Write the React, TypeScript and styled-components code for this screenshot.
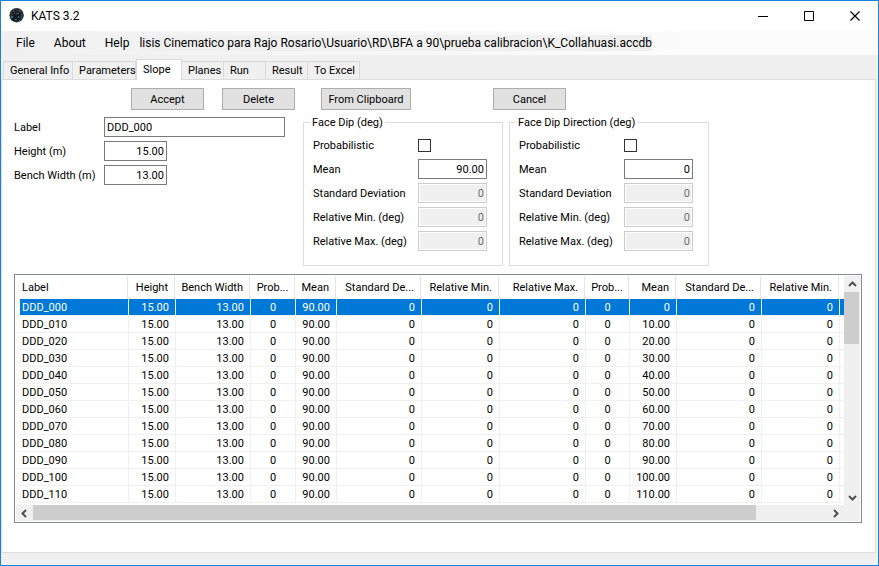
import React, { useState } from "react";
import styled, { createGlobalStyle } from "styled-components";

const GlobalStyle = createGlobalStyle`
  *, *::before, *::after { box-sizing: border-box; }
  body { margin: 0; background: #f0f0f0; }
  body, button, input, table { font: 11px/13px Roboto, "Liberation Sans", Arial, sans-serif; color: #000; }
`;

const Window = styled.div`
  display: flex;
  flex-direction: column;
  min-height: 100vh;
  border: 1px solid #1883d7;
  background: #f0f0f0;
`;

const TitleBar = styled.header`
  display: flex;
  align-items: center;
  height: 30px;
  padding-left: 8px;
  background: #fff;
`;

const Title = styled.h1`
  flex: 1;
  margin: 0 0 0 6px;
  font-size: 12px;
  line-height: 16px;
  font-weight: 400;
`;

const CaptionButton = styled.button`
  display: grid;
  place-items: center;
  width: 46px;
  height: 30px;
  padding: 0;
  border: 0;
  background: transparent;
`;

const MenuBar = styled.nav`
  display: flex;
  align-items: center;
  height: 24px;
  padding-left: 9px;
  background: linear-gradient(90deg, #f0f0f0, #fcfcfc 80%);
`;

const MenuItem = styled.button`
  padding: 0 6px;
  margin-right: 7px;
  border: 0;
  background: transparent;
  font-size: 12px;
  line-height: 16px;
`;

const FilePath = styled.span`
  margin-left: -3px;
  background: #f0f0f0;
  font-size: 12px;
  line-height: 16px;
  white-space: nowrap;
`;

const TabStrip = styled.div`
  display: flex;
  align-items: flex-end;
  height: 24px;
  padding-left: 2px;
`;

const Tab = styled.button<{ $active: boolean; $width: number }>`
  width: ${(p) => p.$width}px;
  height: ${(p) => (p.$active ? 21 : 18)}px;
  margin-bottom: ${(p) => (p.$active ? -1 : 0)}px;
  padding: 0 0 ${(p) => (p.$active ? 2 : 0)}px 6px;
  z-index: ${(p) => (p.$active ? 1 : 0)};
  border: 1px solid #d9d9d9;
  border-bottom: 0;
  border-left-width: ${(p) => (p.$active ? 1 : 0)}px;
  background: ${(p) => (p.$active ? "#fff" : "#f0f0f0")};
  text-align: left;
  white-space: nowrap;
  &:first-child { border-left-width: 1px; }
`;

const Page = styled.main`
  flex: 1;
  margin: 0 2px 12px 0;
  padding: 8px 13px 29px 12px;
  border: 1px solid #dcdcdc;
  background: #fff;
`;

const ButtonRow = styled.div`
  display: flex;
  gap: 18px;
  margin: 0 0 6px 117px;
`;

const PushButton = styled.button<{ $wide?: boolean }>`
  width: ${(p) => (p.$wide ? 90 : 73)}px;
  height: 22px;
  padding: 0;
  border: 1px solid #adadad;
  background: #e1e1e1;
  white-space: nowrap;
`;

const ButtonGroup = styled.div`
  display: flex;
  gap: 18px;
  margin-right: 8px;
`;

const CancelSlot = styled.div`
  margin-left: 64px;
`;

const Editor = styled.section`
  display: flex;
  align-items: flex-start;
  gap: 6px;
  margin-bottom: 8px;
`;

const GeneralFields = styled.div`
  display: grid;
  grid-template-columns: 90px 181px;
  row-gap: 4px;
  align-items: center;
  padding-top: 1px;
  margin-right: 12px;
`;

const FieldLabel = styled.label`
  white-space: nowrap;
`;

const TextBox = styled.input<{ $width: number; $numeric?: boolean }>`
  width: ${(p) => p.$width}px;
  height: 20px;
  padding: 0 2px;
  border: 1px solid #7a7a7a;
  border-radius: 0;
  background: #fff;
  text-align: ${(p) => (p.$numeric ? "right" : "left")};
  &:disabled {
    border-color: #ccc;
    background: #f0f0f0;
    box-shadow: inset 0 0 0 1px #fff;
    color: #6d6d6d;
  }
`;

const Group = styled.fieldset`
  display: grid;
  grid-template-columns: 105px 69px;
  grid-auto-rows: 20px;
  row-gap: 4px;
  align-items: center;
  width: 200px;
  margin: 0;
  padding: 6px 9px 14px;
  border: 1px solid #dcdcdc;
`;

const Legend = styled.legend`
  margin-left: -3px;
  padding: 0 2px;
`;

const CheckBox = styled.input`
  appearance: none;
  width: 13px;
  height: 13px;
  margin: 0;
  border: 1px solid #333;
  background: #fff;
  &:checked { background: #333; box-shadow: inset 0 0 0 2px #fff; }
`;

const ListView = styled.section`
  display: grid;
  grid-template-columns: minmax(0, 1fr) 16px;
  padding: 1px;
  border: 1px solid #828790;
`;

const ListBody = styled.div`
  height: 229px;
  overflow: hidden;
`;

const Table = styled.table`
  width: 100%;
  table-layout: fixed;
  border-collapse: separate;
  border-spacing: 0;
`;

const Col = styled.col<{ $width?: number }>`
  width: ${(p) => (p.$width ? `${p.$width}px` : "auto")};
`;

type Align = "left" | "right" | "center";

const HeadCell = styled.th<{ $align: Align }>`
  height: 23px;
  padding: 0 ${(p) => (p.$align === "center" ? 2 : 8)}px 0 ${(p) => (p.$align === "left" ? 6 : 0)}px;
  background: linear-gradient(#e5e5e5, #e5e5e5) no-repeat right 1px top / 1px 100%;
  font-weight: 400;
  text-align: ${(p) => p.$align};
  white-space: nowrap;
  &:last-child { background: none; padding: 0; }
`;

const Cell = styled.td<{ $align: Align }>`
  height: 17px;
  padding: 1px ${(p) => (p.$align === "right" ? 6 : 2)}px 0 2px;
  border-right: 1px solid #f0f0f0;
  border-bottom: 1px solid #f0f0f0;
  text-align: ${(p) => p.$align};
  white-space: nowrap;
  &:last-child { border-right: 0; padding: 0; }
`;

const Row = styled.tr<{ $selected: boolean }>`
  background: ${(p) => (p.$selected ? "#0078d7" : "#fff")};
  color: ${(p) => (p.$selected ? "#fff" : "#000")};
  ${Cell}:first-child { border-left: 4px solid #fff; }
`;

const ScrollTrack = styled.div<{ $vertical?: boolean }>`
  display: flex;
  flex-direction: ${(p) => (p.$vertical ? "column" : "row")};
  justify-content: space-between;
  ${(p) => (p.$vertical ? "" : "height: 16px;")}
  background: #f0f0f0;
`;

const ScrollButton = styled.button`
  display: grid;
  place-items: center;
  width: 17px;
  height: 16px;
  padding: 0;
  border: 0;
  background: transparent;
`;

const ScrollLane = styled.div`
  flex: 1;
`;

const VThumb = styled.div`
  width: 15px;
  height: 52px;
  background: #cdcdcd;
`;

const HThumb = styled.div`
  width: 91%;
  height: 15px;
  background: #cdcdcd;
`;

const Corner = styled.div`
  background: #f0f0f0;
`;

const arrows = {
  up: "M1 6 4.5 2.5 8 6",
  down: "M1 3 4.5 6.5 8 3",
  left: "M6 1 2.5 4.5 6 8",
  right: "M3 1 6.5 4.5 3 8",
};

function Arrow({ dir }: { dir: keyof typeof arrows }) {
  return (
    <svg width="9" height="9" viewBox="0 0 9 9" aria-hidden="true">
      <path d={arrows[dir]} fill="none" stroke="#505050" strokeWidth="2" />
    </svg>
  );
}

function AppIcon() {
  return (
    <svg width="16" height="16" viewBox="0 0 16 16" aria-hidden="true">
      <circle cx="7.6" cy="7.2" r="7.2" fill="#2b3033" />
      <path d="M3 4l3-2 2 2 3-1 2 3-2 2 1 3-3 2-3-1-3 1-1-4 2-2z" fill="#14191c" />
      <path d="M4 3l2 1M10 3l2 1M7 6l3-1M12 9l1 2" stroke="#555d60" strokeWidth="1" />
      <path d="M2 8h2v2H2zM6 11h2v1H6zM9 8h1v2H9zM12 6h1v1h-1zM5 5h1v1H5zM10 12h1v1h-1z" fill="#147d99" />
    </svg>
  );
}

const tabs = [
  { name: "General Info", width: 70 },
  { name: "Parameters", width: 63 },
  { name: "Slope", width: 46 },
  { name: "Planes", width: 42 },
  { name: "Run", width: 42 },
  { name: "Result", width: 42 },
  { name: "To Excel", width: 52 },
];

const columns: { title: string; width?: number; align: Align }[] = [
  { title: "Label", width: 113, align: "left" },
  { title: "Height", width: 47, align: "right" },
  { title: "Bench Width", width: 75, align: "right" },
  { title: "Prob...", width: 45, align: "center" },
  { title: "Mean", width: 41, align: "right" },
  { title: "Standard De...", width: 85, align: "right" },
  { title: "Relative Min.", width: 78, align: "right" },
  { title: "Relative Max.", width: 86, align: "right" },
  { title: "Prob...", width: 44, align: "center" },
  { title: "Mean", width: 47, align: "right" },
  { title: "Standard De...", width: 85, align: "right" },
  { title: "Relative Min.", width: 78, align: "right" },
  { title: "", align: "right" },
];

const rows = Array.from({ length: 12 }, (_, i) => {
  const angle = i * 10;
  return [
    `DDD_${String(angle).padStart(3, "0")}`,
    "15.00", "13.00", "0", "90.00", "0", "0", "0", "0",
    angle === 0 ? "0" : angle.toFixed(2),
    "0", "0", "",
  ];
});

function DipGroup({ id, title, mean }: { id: string; title: string; mean: string }) {
  const disabled = ["Standard Deviation", "Relative Min. (deg)", "Relative Max. (deg)"];
  return (
    <Group>
      <Legend>{title}</Legend>
      <FieldLabel htmlFor={`${id}-prob`}>Probabilistic</FieldLabel>
      <CheckBox id={`${id}-prob`} type="checkbox" />
      <FieldLabel htmlFor={`${id}-mean`}>Mean</FieldLabel>
      <TextBox id={`${id}-mean`} $width={69} $numeric defaultValue={mean} />
      {disabled.map((name, i) => (
        <React.Fragment key={name}>
          <FieldLabel htmlFor={`${id}-${i}`}>{name}</FieldLabel>
          <TextBox id={`${id}-${i}`} $width={69} $numeric disabled defaultValue="0" />
        </React.Fragment>
      ))}
    </Group>
  );
}

export default function App() {
  const [tab, setTab] = useState("Slope");
  const [selected, setSelected] = useState(0);
  return (
    <Window>
      <GlobalStyle />
      <TitleBar>
        <AppIcon />
        <Title>KATS 3.2</Title>
        <CaptionButton aria-label="Minimize">
          <svg width="11" height="11"><path d="M0 5.5h10" stroke="#000" /></svg>
        </CaptionButton>
        <CaptionButton aria-label="Maximize">
          <svg width="11" height="11"><path d="M.5 .5h9v9h-9z" fill="none" stroke="#000" /></svg>
        </CaptionButton>
        <CaptionButton aria-label="Close">
          <svg width="11" height="11"><path d="M.5 .5l9 9M9.5 .5l-9 9" stroke="#000" strokeWidth="1.2" /></svg>
        </CaptionButton>
      </TitleBar>
      <MenuBar>
        <MenuItem>File</MenuItem>
        <MenuItem>About</MenuItem>
        <MenuItem>Help</MenuItem>
        <FilePath>{"lisis Cinematico para Rajo Rosario\\Usuario\\RD\\BFA a 90\\prueba calibracion\\K_Collahuasi.accdb"}</FilePath>
      </MenuBar>
      <TabStrip role="tablist">
        {tabs.map((t) => (
          <Tab key={t.name} role="tab" aria-selected={t.name === tab} $active={t.name === tab} $width={t.width} onClick={() => setTab(t.name)}>
            {t.name}
          </Tab>
        ))}
      </TabStrip>
      <Page>
        <ButtonRow>
          <ButtonGroup>
            <PushButton>Accept</PushButton>
            <PushButton>Delete</PushButton>
          </ButtonGroup>
          <PushButton $wide>From Clipboard</PushButton>
          <CancelSlot>
            <PushButton>Cancel</PushButton>
          </CancelSlot>
        </ButtonRow>
        <Editor>
          <GeneralFields>
            <FieldLabel htmlFor="label">Label</FieldLabel>
            <TextBox id="label" $width={181} defaultValue="DDD_000" />
            <FieldLabel htmlFor="height">Height (m)</FieldLabel>
            <TextBox id="height" $width={63} $numeric defaultValue="15.00" />
            <FieldLabel htmlFor="bench">Bench Width (m)</FieldLabel>
            <TextBox id="bench" $width={63} $numeric defaultValue="13.00" />
          </GeneralFields>
          <DipGroup id="dip" title="Face Dip (deg)" mean="90.00" />
          <DipGroup id="dir" title="Face Dip Direction (deg)" mean="0" />
        </Editor>
        <ListView>
          <ListBody>
            <Table>
              <colgroup>
                {columns.map((c, i) => <Col key={i} $width={c.width} />)}
              </colgroup>
              <thead>
                <tr>
                  {columns.map((c, i) => <HeadCell key={i} $align={c.align}>{c.title}</HeadCell>)}
                </tr>
              </thead>
              <tbody>
                {rows.map((r, i) => (
                  <Row key={r[0]} $selected={i === selected} onClick={() => setSelected(i)}>
                    {r.map((v, j) => <Cell key={j} $align={columns[j].align}>{v}</Cell>)}
                  </Row>
                ))}
              </tbody>
            </Table>
          </ListBody>
          <ScrollTrack $vertical>
            <ScrollButton aria-label="Scroll up"><Arrow dir="up" /></ScrollButton>
            <ScrollLane><VThumb /></ScrollLane>
            <ScrollButton aria-label="Scroll down"><Arrow dir="down" /></ScrollButton>
          </ScrollTrack>
          <ScrollTrack>
            <ScrollButton aria-label="Scroll left"><Arrow dir="left" /></ScrollButton>
            <ScrollLane><HThumb /></ScrollLane>
            <ScrollButton aria-label="Scroll right"><Arrow dir="right" /></ScrollButton>
          </ScrollTrack>
          <Corner />
        </ListView>
      </Page>
    </Window>
  );
}
